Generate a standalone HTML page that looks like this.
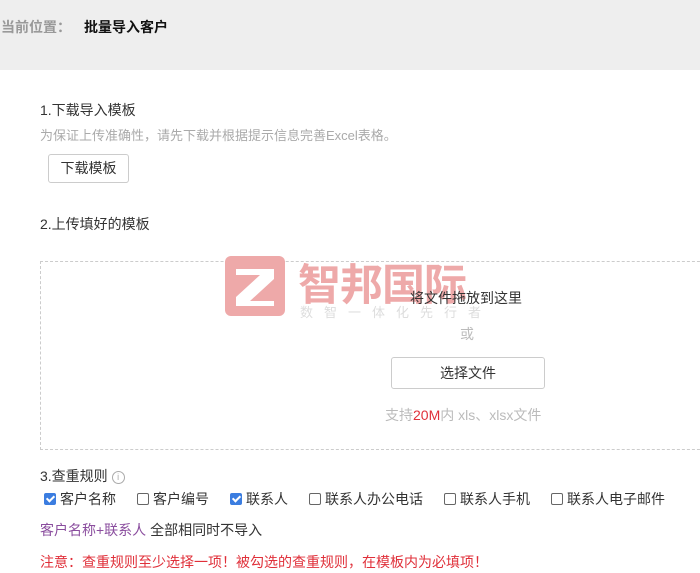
<!DOCTYPE html>
<html><head><meta charset="utf-8"><style>
body{margin:0;width:700px;height:573px;overflow:hidden;background:#fff;font-family:"Liberation Sans","Noto Sans CJK SC",sans-serif;font-size:14px;color:#333;position:relative}
.a{position:absolute;white-space:nowrap}
.hdr{position:absolute;left:0;top:0;width:700px;height:70px;background:#eeeeee}
.btn{position:absolute;border:1px solid #ccc;border-radius:3px;background:#fff;text-align:center;box-sizing:border-box}
.cb{display:inline-block;width:12px;height:12px;border:1px solid #666;border-radius:2px;vertical-align:-1px;margin-right:4px;box-sizing:border-box;position:relative}
.cb.on{background:#3b7de0;border-color:#3b7de0}
.cb.on:after{content:"";position:absolute;left:3px;top:0px;width:3px;height:6px;border:solid #fff;border-width:0 2px 2px 0;transform:rotate(45deg)}
.row span.i{margin-right:21px}
</style></head><body>
<div class="hdr"></div>
<div class="a" style="left:1px;top:17px;font-size:14px;color:#999;font-weight:bold">当前位置：</div>
<div class="a" style="left:84px;top:17px;font-size:14px;color:#111;font-weight:bold">批量导入客户</div>
<div class="a" style="left:40px;top:100px">1.下载导入模板</div>
<div class="a" style="left:40px;top:125px;font-size:13px;color:#aaa">为保证上传准确性，请先下载并根据提示信息完善Excel表格。</div>
<div class="btn" style="left:48px;top:154px;width:81px;height:29px;line-height:27px">下载模板</div>
<div class="a" style="left:40px;top:214px">2.上传填好的模板</div>
<div style="position:absolute;left:40px;top:261px;width:680px;height:189px;border:1px dashed #ccc;box-sizing:border-box"></div>
<div style="position:absolute;left:225px;top:256px;width:60px;height:60px;background:#eea9a9;border-radius:6px"></div>
<svg style="position:absolute;left:225px;top:256px" width="60" height="60"><path d="M11 13H49V23L25 45H49V50H11V41L35 19H11Z" fill="#fff"/></svg>
<div class="a" style="left:298px;top:251px;font-size:43px;color:#eea9a9;font-weight:bold;letter-spacing:-1px">智邦国际</div>
<div class="a" style="left:300px;top:302px;font-size:13px;color:#ddd;letter-spacing:11px">数智一体化先行者</div>
<div class="a" style="left:410px;top:288px">将文件拖放到这里</div>
<div class="a" style="left:460px;top:324px;color:#bbb">或</div>
<div class="btn" style="left:391px;top:357px;width:154px;height:32px;line-height:30px">选择文件</div>
<div class="a" style="left:385px;top:405px;color:#bbb">支持<span style="color:#e0303a">20M</span>内 xls、xlsx文件</div>
<div class="a" style="left:40px;top:466px">3.查重规则 <span style="display:inline-block;width:11px;height:11px;border:1px solid #aaa;border-radius:50%;font-size:9px;line-height:11px;text-align:center;color:#aaa;vertical-align:1px">i</span></div>
<div class="a row" style="left:44px;top:489px"><span class="i"><span class="cb on"></span>客户名称</span><span class="i"><span class="cb"></span>客户编号</span><span class="i"><span class="cb on"></span>联系人</span><span class="i"><span class="cb"></span>联系人办公电话</span><span class="i"><span class="cb"></span>联系人手机</span><span class="i"><span class="cb"></span>联系人电子邮件</span></div>
<div class="a" style="left:40px;top:520px"><span style="color:#8a4d9e">客户名称+联系人</span> 全部相同时不导入</div>
<div class="a" style="left:40px;top:552px;color:#e0303a">注意：查重规则至少选择一项！被勾选的查重规则，在模板内为必填项！</div>
</body></html>
